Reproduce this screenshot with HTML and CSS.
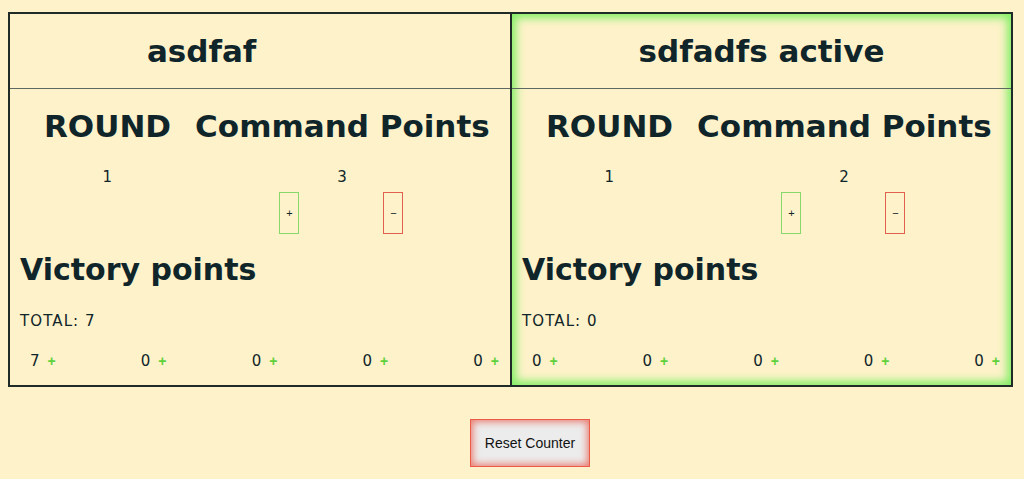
FILE: index.html
```html
<!DOCTYPE html>
<html lang="en">
<head>
    <meta charset="UTF-8">
    <meta name="viewport" content="width=device-width, initial-scale=1.0">
    <title>Kill Team Counter</title>
    <link rel="stylesheet" href="styles.css">
</head>
<body>
    <div class="board">
        <section class="player">
            <header class="player-head">
                <h1>asdfaf <span class="active-tag hidden">active</span></h1>
            </header>
            <div class="stats">
                <div class="stat round">
                    <h2>ROUND</h2>
                    <p class="value">1</p>
                </div>
                <div class="stat cp">
                    <h2>Command Points</h2>
                    <p class="value">3</p>
                    <div class="cp-buttons">
                        <button class="cp-btn plus">+</button>
                        <button class="cp-btn minus">&minus;</button>
                    </div>
                </div>
            </div>
            <h2 class="vp-title">Victory points</h2>
            <p class="total">TOTAL: 7</p>
            <div class="vp-row">
                <div class="vp"><span>7</span><button class="vp-add">+</button></div>
                <div class="vp"><span>0</span><button class="vp-add">+</button></div>
                <div class="vp"><span>0</span><button class="vp-add">+</button></div>
                <div class="vp"><span>0</span><button class="vp-add">+</button></div>
                <div class="vp"><span>0</span><button class="vp-add">+</button></div>
            </div>
        </section>

        <section class="player active">
            <header class="player-head">
                <h1>sdfadfs <span class="active-tag">active</span></h1>
            </header>
            <div class="stats">
                <div class="stat round">
                    <h2>ROUND</h2>
                    <p class="value">1</p>
                </div>
                <div class="stat cp">
                    <h2>Command Points</h2>
                    <p class="value">2</p>
                    <div class="cp-buttons">
                        <button class="cp-btn plus">+</button>
                        <button class="cp-btn minus">&minus;</button>
                    </div>
                </div>
            </div>
            <h2 class="vp-title">Victory points</h2>
            <p class="total">TOTAL: 0</p>
            <div class="vp-row">
                <div class="vp"><span>0</span><button class="vp-add">+</button></div>
                <div class="vp"><span>0</span><button class="vp-add">+</button></div>
                <div class="vp"><span>0</span><button class="vp-add">+</button></div>
                <div class="vp"><span>0</span><button class="vp-add">+</button></div>
                <div class="vp"><span>0</span><button class="vp-add">+</button></div>
            </div>
        </section>
    </div>

    <div class="footer">
        <button class="reset">Reset Counter</button>
    </div>
</body>
</html>
```

FILE: styles.css
```css
body {
    font-family: "DejaVu Sans", sans-serif;
    color: #10252a;
    background-color: #fdf2c9;
    margin: 0;
    padding: 12px 8px;
}

.board {
    display: flex;
    width: 1005px;
}

.player {
    width: 500px;
    border: 2px solid #1f2b27;
}

.player.active {
    border-left: none;
    width: 499px;
    box-shadow: inset 0 0 9px 4px #84ef66;
}

.player-head {
    height: 74px;
    display: flex;
    align-items: center;
    justify-content: center;
    border-bottom: 1px solid #5d6862;
}

.player-head h1 {
    margin: 0;
    font-size: 31px;
    line-height: 40px;
}

.hidden {
    visibility: hidden;
}

.stats {
    display: flex;
    gap: 24px;
    padding: 17px 0 0 34px;
}

.stat {
    display: flex;
    flex-direction: column;
    align-items: center;
}

.stat h2 {
    margin: 0;
    font-size: 31px;
    line-height: 40px;
}

.value {
    margin: 21px 0 0;
    font-size: 15px;
    line-height: 20px;
    letter-spacing: 0.5px;
}

.cp-buttons {
    display: flex;
    gap: 84px;
    margin: 5px 2px 0 0;
}

.cp-btn {
    width: 20px;
    height: 42px;
    padding: 0;
    background: transparent;
    color: #10252a;
    font-size: 11px;
    border: 1px solid #86d86a;
}

.cp-btn.minus {
    border-color: #e0604f;
}

.vp-title {
    margin: 16px 0 0 10px;
    font-size: 30px;
    line-height: 40px;
}

.total {
    margin: 21px 0 0 10px;
    font-size: 15px;
    line-height: 20px;
    letter-spacing: 1.1px;
}

.vp-row {
    display: flex;
    justify-content: space-between;
    padding: 20px 11px 14px 20px;
}

.vp {
    display: flex;
    align-items: center;
    gap: 8px;
    font-size: 15px;
    line-height: 20px;
}

.vp-add {
    padding: 0;
    border: none;
    background: transparent;
    color: #5fd13c;
    font-size: 14px;
    font-weight: bold;
}

.footer {
    display: flex;
    justify-content: center;
    padding: 32px 0 0 36px;
}

.reset {
    font-family: "Liberation Sans", Arial, sans-serif;
    font-size: 14px;
    color: #111;
    background-color: #ececec;
    border: 1px solid #ea5a47;
    box-shadow: inset 0 0 7px 2px rgba(234, 80, 64, 0.7);
    padding: 15px 14px;
}
```
